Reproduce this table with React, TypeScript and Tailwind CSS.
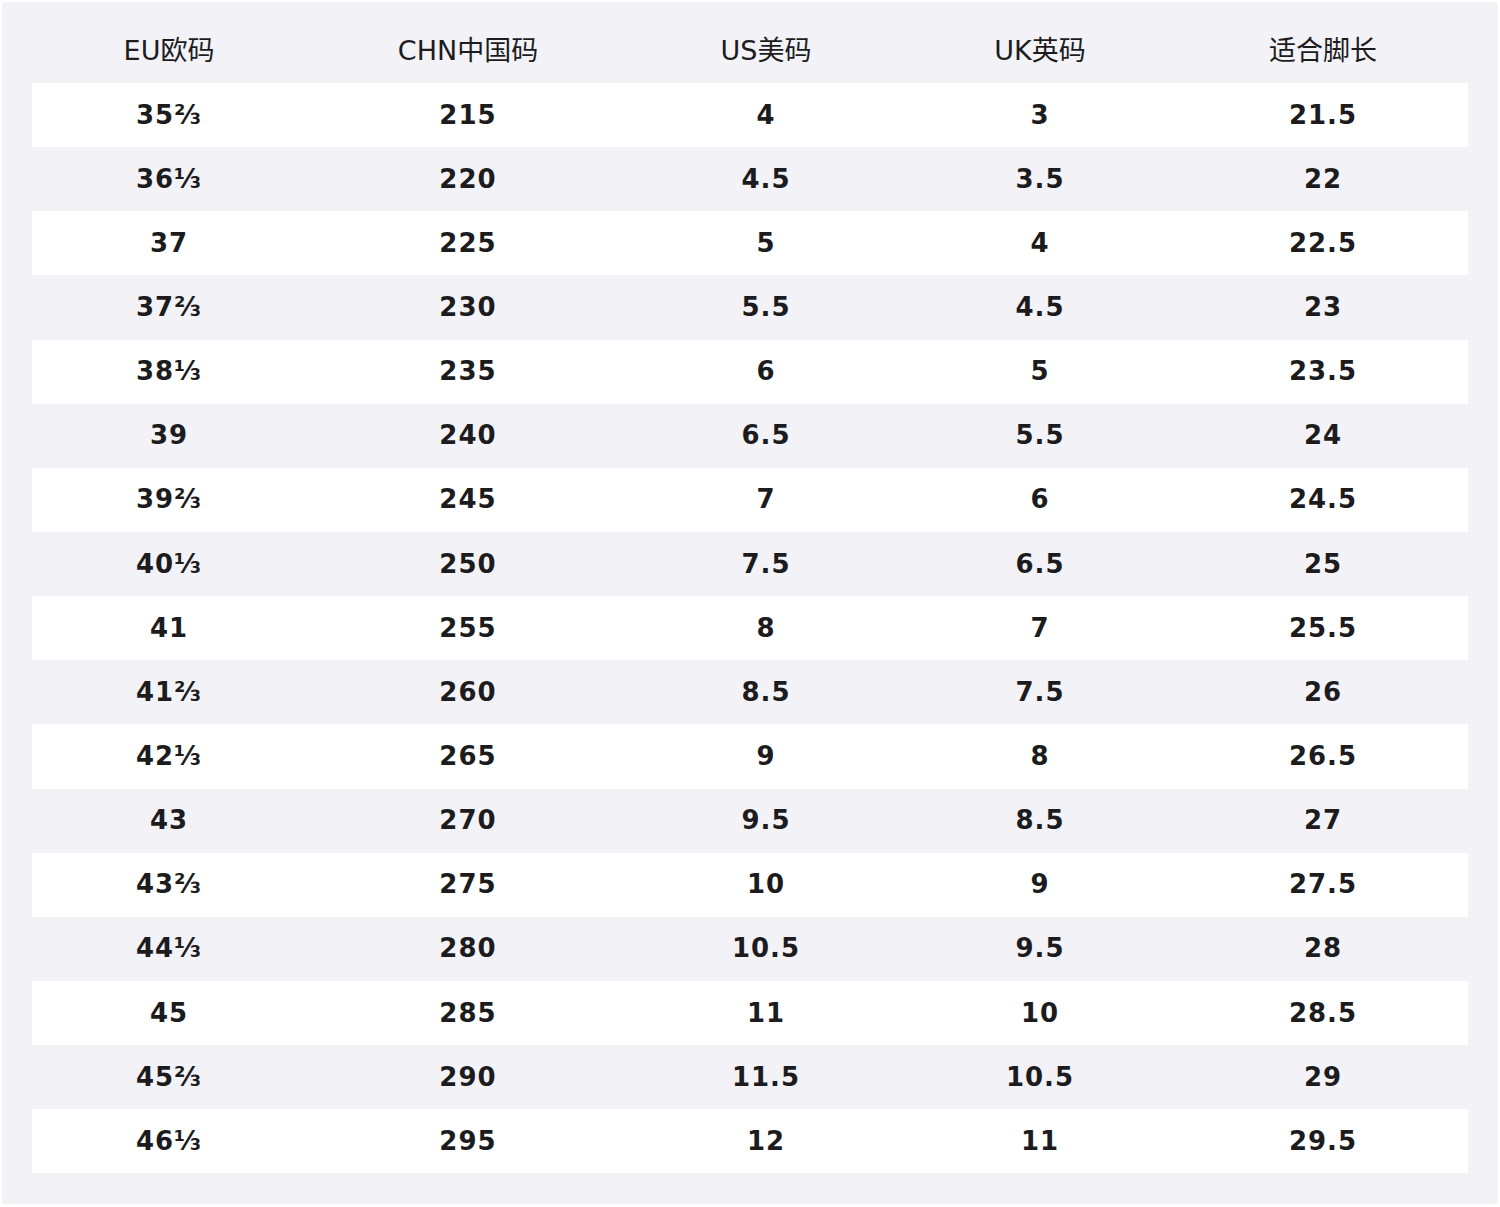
const rows: [string, string, string, string, string][] = [
  ['35⅔', '215', '4', '3', '21.5'],
  ['36⅓', '220', '4.5', '3.5', '22'],
  ['37', '225', '5', '4', '22.5'],
  ['37⅔', '230', '5.5', '4.5', '23'],
  ['38⅓', '235', '6', '5', '23.5'],
  ['39', '240', '6.5', '5.5', '24'],
  ['39⅔', '245', '7', '6', '24.5'],
  ['40⅓', '250', '7.5', '6.5', '25'],
  ['41', '255', '8', '7', '25.5'],
  ['41⅔', '260', '8.5', '7.5', '26'],
  ['42⅓', '265', '9', '8', '26.5'],
  ['43', '270', '9.5', '8.5', '27'],
  ['43⅔', '275', '10', '9', '27.5'],
  ['44⅓', '280', '10.5', '9.5', '28'],
  ['45', '285', '11', '10', '28.5'],
  ['45⅔', '290', '11.5', '10.5', '29'],
  ['46⅓', '295', '12', '11', '29.5'],
];

const headers = ['EU欧码', 'CHN中国码', 'US美码', 'UK英码', '适合脚长'];

export default function App() {
  return (
    <div className="min-h-screen bg-white p-[2px] font-['DejaVu_Sans','Noto_Sans_CJK_SC',sans-serif] text-[#1c1c1e]">
      <div className="rounded-[3px] bg-[#f3f2f7] px-[30px] pb-[31px]">
        {/* En-tête */}
        <div className="grid h-[81px] grid-cols-[274px_324px_272px_276px_290px] pt-[18px]">
          {headers.map((h) => (
            <div key={h} className="flex items-center justify-center text-[27px]">
              {h}
            </div>
          ))}
        </div>

        {/* Lignes du tableau */}
        {rows.map((r, i) => (
          <div
            key={r[0]}
            className={`grid h-[64.15px] grid-cols-[274px_324px_272px_276px_290px] ${i % 2 === 0 ? 'bg-white' : 'bg-transparent'}`}
          >
            {r.map((c, j) => (
              <div key={j} className="flex items-center justify-center text-[26px] font-bold tracking-[1px]">
                {c}
              </div>
            ))}
          </div>
        ))}
      </div>
    </div>
  );
}
